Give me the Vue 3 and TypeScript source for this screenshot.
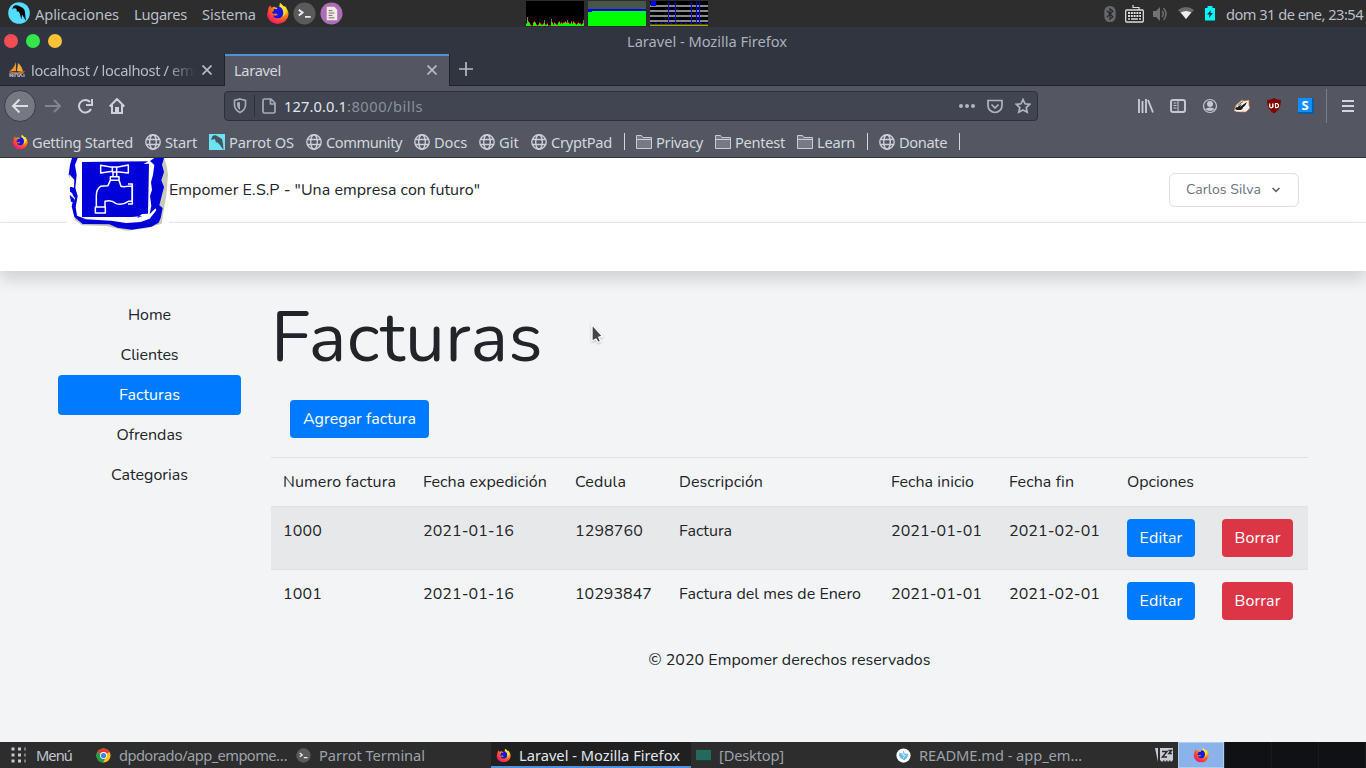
<script setup lang="ts">
import type { Directive } from 'vue'

// Spreads a label's letters so that it takes exactly the given width.
const vFit: Directive<HTMLElement, number> = {
  mounted(el, { value }) {
    const count = (el.textContent ?? '').length
    if (!count) return
    const natural = el.getBoundingClientRect().width
    el.style.letterSpacing = `${(value - natural) / count}px`
  },
}

interface Bookmark { icon: string; label?: string; width?: number }
const bookmarks: Bookmark[] = [
  { icon: 'firefox', label: 'Getting Started', width: 101 },
  { icon: 'globe', label: 'Start', width: 32 },
  { icon: 'parrot', label: 'Parrot OS', width: 65 },
  { icon: 'globe', label: 'Community', width: 76 },
  { icon: 'globe', label: 'Docs', width: 33 },
  { icon: 'globe', label: 'Git', width: 20 },
  { icon: 'globe', label: 'CryptPad', width: 61 },
  { icon: 'sep' },
  { icon: 'folder', label: 'Privacy', width: 47 },
  { icon: 'folder', label: 'Pentest', width: 50 },
  { icon: 'folder', label: 'Learn', width: 38 },
  { icon: 'sep' },
  { icon: 'globe', label: 'Donate', width: 48 },
  { icon: 'sep' },
]

const menu = [
  { label: 'Home', width: 43, active: false },
  { label: 'Clientes', width: 58, active: false },
  { label: 'Facturas', width: 61, active: true },
  { label: 'Ofrendas', width: 66, active: false },
  { label: 'Categorias', width: 77, active: false },
]

const headers = [
  { label: 'Numero factura', width: 113 },
  { label: 'Fecha expedición', width: 124 },
  { label: 'Cedula', width: 51 },
  { label: 'Descripción', width: 84 },
  { label: 'Fecha inicio', width: 83 },
  { label: 'Fecha fin', width: 65 },
  { label: 'Opciones', width: 67 },
]

const bills = [
  [['1000', 39], ['2021-01-16', 91], ['1298760', 68], ['Factura', 53], ['2021-01-01', 91], ['2021-02-01', 91]],
  [['1001', 39], ['2021-01-16', 91], ['10293847', 77], ['Factura del mes de Enero', 182], ['2021-01-01', 91], ['2021-02-01', 91]],
] as [string, number][][]

const tasks = [
  { icon: 'chrome', label: 'dpdorado/app_empome…', width: 168, active: false },
  { icon: 'terminal', label: 'Parrot Terminal', width: 106, active: false },
  { icon: 'firefox', label: 'Laravel - Mozilla Firefox', width: 161, active: true },
  { icon: 'desktop', label: '[Desktop]', width: 65, active: false },
  { icon: 'code', label: 'README.md - app_em…', width: 163, active: false },
]

const cpu = [3, 9, 5, 4, 2, 1, 1, 4, 5, 4, 2, 1, 2, 4, 3, 2, 2, 3, 6, 2, 2, 3, 1, 1, 1, 7, 4, 2, 4, 3, 2, 2, 4, 5, 3, 4, 3, 4, 4, 5, 4, 6, 4, 3, 3, 5, 3, 5, 4, 3, 2, 3, 4, 3, 3, 2, 3, 6]
</script>

<template>
  <div class="desktop">
    <svg class="defs" width="0" height="0">
      <defs>
        <radialGradient id="foxBody" cx=".75" cy=".15" r="1">
          <stop offset="0" stop-color="#fff44f" /><stop offset=".3" stop-color="#ffc21f" />
          <stop offset=".55" stop-color="#ff6b1d" /><stop offset=".8" stop-color="#ff2a4d" />
          <stop offset="1" stop-color="#e31587" />
        </radialGradient>
        <symbol id="firefox" viewBox="0 0 24 24">
          <path d="M2 10C2 7 3 5 4.500 3.500L5.500 6l3-1 5 2 1-6c2 1 3 2.500 3.500 4l2-.5C22 7 23.500 10 23.500 13a11.300 11 0 0 1-22.500 0Z" fill="url(#foxBody)" />
          <path d="M8 7l3 .5 2-2.500c3 0 5 3 5 6 0 4-3 6.500-6 6-2 0-4-1-4.500-3l3 .3 2-1.300-2-1-3 .2-1.500-2 2-.2z" fill="#1414e8" />
          <path d="M14.500 1c2 2 2.500 5 3.500 7s1 5-1 7c4-1 5-7 1.500-10.500C17 3.500 16 2 14.500 1Z" fill="#ffe226" />
        </symbol>
        <symbol id="globe" viewBox="0 0 16 16">
          <g fill="none" stroke="#cdd0d8" stroke-width="1.400"><circle cx="8" cy="8" r="7.200" /><ellipse cx="8" cy="8" rx="3.300" ry="7.200" /><path d="M1.500 5.500h13M1.500 10.500h13" /></g>
        </symbol>
        <symbol id="folder" viewBox="0 0 16 16">
          <path d="M.5 14.500v-13h5l1.500 2h8.500v11z" fill="#777a84" stroke="#c9ccd4" /><path d="M.5 5.500h15" stroke="#c9ccd4" />
        </symbol>
        <symbol id="parrot" viewBox="0 0 16 16">
          <path d="M0 0h16v16H0z" fill="#6be3f2" /><path d="M3 3c1-2 4-2 5-1l5 3 1 5 .5 6-3.500-5-3-3-1 1-1-4-4 1z" fill="#46545e" />
        </symbol>
        <symbol id="terminal" viewBox="0 0 24 24">
          <circle cx="12" cy="12" r="11.500" fill="#5a5a5a" /><path d="M6 8l4 3-4 3M12.500 15.500h6" fill="none" stroke="#eee" stroke-width="2" />
        </symbol>
        <symbol id="chrome" viewBox="0 0 16 16">
          <circle cx="8" cy="8" r="7.500" fill="#fbc116" /><path d="M8 8L1.500 4.200A7.500 7.500 0 0 1 14.500 4.300z" fill="#e33b2e" /><path d="M8 8L1.500 4.200A7.500 7.500 0 0 0 7.500 15.500L10.500 10z" fill="#229a4f" /><circle cx="8" cy="8" r="3.700" fill="#fff" /><circle cx="8" cy="8" r="2.800" fill="#3f82ed" />
        </symbol>
        <symbol id="desktop" viewBox="0 0 16 16"><path d="M0 2h16v11H0z" fill="#25695a" /><path d="M0 13h16v1H0z" fill="#174237" /></symbol>
        <symbol id="code" viewBox="0 0 16 16">
          <circle cx="8" cy="8" r="7.600" fill="#fff" /><path d="M4 5l3 1 1-3 2 3 3 0-1 4-3 3-4-2-2-3z" fill="#65b9e6" /><path d="M6 7l4 1-3 3M9 4l-1 4" fill="none" stroke="#d4effb" />
        </symbol>
      </defs>
    </svg>

    <header class="panel">
      <svg class="parrot-logo" viewBox="0 0 22 22"><circle cx="11" cy="11" r="10.800" fill="#54dbff" /><path d="M5 5c1-2 4-2.500 6-1l4 2c2 2 2 4 2.200 6.500L18 19l-4-6.500-.5 5-2-6.500-1.500-2-1 1-.5-3C7 6 5 6 4 8z" fill="#050a0d" /></svg>
      <span v-fit="84" class="m-app">Aplicaciones</span>
      <span v-fit="53" class="m-places">Lugares</span>
      <span v-fit="54" class="m-system">Sistema</span>
      <svg class="launch first"><use href="#firefox" /></svg>
      <svg class="launch"><use href="#terminal" /></svg>
      <svg class="launch last" viewBox="0 0 24 24"><circle cx="12" cy="12" r="11.500" fill="#ad6cb7" /><path d="M7 5h8l3 3v11H7z" fill="#f1edde" /><path d="M9 9h4M9 11.500h6M9 14h4M9 16.500h6" stroke="#75627a" /></svg>
      <svg class="mon first" viewBox="0 0 58 25">
        <path d="M0 0h58v25H0z" fill="#000" />
        <g v-for="(v, i) in cpu" :key="i"><rect :x="i" :y="25 - v" width="1" :height="v" :fill="v > 5 ? '#777' : '#f00'" /><rect :x="i" :y="26 - v + (v > 5 ? 2 : 0)" width="1" :height="v" fill="#0f0" /></g>
      </svg>
      <svg class="mon" viewBox="0 0 58 25"><path d="M0 0h58v25H0z" fill="#46564b" /><path d="M0 8h58v3H0z" fill="#00f" /><path d="M0 11h4v-1h54v15H0z" fill="#0f0" /></svg>
      <svg class="mon" viewBox="0 0 58 25"><path d="M0 0h58v25H0z" fill="#000" /><path d="M0 5h58M0 10h58M0 15h58M0 20h58" stroke="#888" stroke-width="2" /><path d="M18.500 1v22M25.500 1v22M41.500 1v22M46.500 1v22M49.500 1v22" stroke="#00f" /><path d="M1 0h5v5H1z" fill="#00f" /><path d="M0 22.500h58" stroke="#00f" stroke-dasharray="2 3" /><path d="M0 23h58v1H0z" fill="red" /><path d="M0 24h58v1H0z" fill="#0f0" /></svg>
      <svg class="tray bt" viewBox="0 0 12 17"><rect width="12" height="17" rx="5.500" fill="#65686c" /><path d="M2.500 5l6.500 6.500L6 14V3l3 2.500L2.500 12" fill="none" stroke="#242424" stroke-width="1.200" /></svg>
      <svg class="tray kb" viewBox="0 0 19 18"><path d="M8 0v2.500h6V5" fill="none" stroke="#ddd" stroke-width="1.200" /><rect x=".7" y="5" width="17.600" height="12" rx="1" fill="#222" stroke="#ddd" stroke-width="1.300" /><path d="M3 8h13M3 11h13" stroke="#ddd" stroke-width="2" stroke-dasharray="2 .8" /><path d="M3 14h2M6 14h7M14 14h2" stroke="#ddd" stroke-width="1.600" /></svg>
      <svg class="tray vol" viewBox="0 0 16 16"><path d="M0 5h3l4-4v14l-4-4H0z" fill="#707276" /><path d="M9 5q2.500 3 0 6M10.500 2q5 6 0 12" fill="none" stroke="#66686b" stroke-width="1.700" /></svg>
      <svg class="tray wifi" viewBox="0 0 16 13"><path d="M0 3q8-6 16 0L8 12z" fill="#686a6c" /><path d="M2.700 5.500q5.300-3 10.600 0L8 12z" fill="#eceef2" /></svg>
      <svg class="tray bat" viewBox="0 0 10 15"><path d="M0 2h2.500V0h5v2H10v12.500H0z" fill="#00f7ff" /><path d="M6 4L2 8.500h2.500L4 12l4-5H5.500z" fill="#20373b" /></svg>
      <span v-fit="137" class="clock">dom 31 de ene, 23:54</span>
    </header>

    <section class="browser">
      <div class="titlebar"><i class="dot red" /><i class="dot green" /><i class="dot yellow" /><span v-fit="160" class="wtitle">Laravel - Mozilla Firefox</span></div>
      <div class="tabs">
        <div class="tab">
          <svg class="pma" viewBox="0 0 16 16"><path d="M7 0v9H1q4-3 6-9z" fill="#ef9233" /><path d="M9 1q4 3 5 9L8 9z" fill="#f6a936" /><path d="M0 9l8 1.300L16 9l-2 3H2z" fill="#b86e2f" /><path d="M1 15v-3l2 2 1-2v3M6 15v-3h3v3M10 15l1.500-3 2 3M15 12v3" fill="none" stroke="#a7a9ca" stroke-width="1.200" /></svg>
          <span class="fade"><span v-fit="171">localhost / localhost / emp</span></span>
          <svg class="close" viewBox="0 0 10 10"><path d="M.5.500l9 9M9.500.500l-9 9" /></svg>
        </div>
        <div class="tab active"><span v-fit="47">Laravel</span><svg class="close" viewBox="0 0 10 10"><path d="M.5.500l9 9M9.500.500l-9 9" /></svg></div>
        <svg class="plus" viewBox="0 0 14 14"><path d="M7 0v14M0 7h14" stroke="#b7bac2" stroke-width="1.700" /></svg>
      </div>

      <div class="toolbar">
        <div class="back"><svg width="18" height="16" viewBox="0 0 18 16"><path d="M17 8H2M8.500 1.500L2 8l6.500 6.500" /></svg></div>
        <svg class="tool fwd" viewBox="0 0 16 16"><path d="M0 8h15M9 2l6 6-6 6" /></svg>
        <svg class="tool reload" viewBox="0 0 16 16"><path d="M13 4A6.300 6.300 0 1 0 14 11M15 1v6H9" /></svg>
        <svg class="tool home" viewBox="0 0 16 16"><path d="M.7 8.500L8 1l7.300 7.500M3 7v8h10V7M7 15v-5h2v5" /></svg>
        <div class="address">
          <svg class="shield" viewBox="0 0 14 16"><path d="M7 1l5.500 1.500v5Q12 12 7 14.500 2 12 1.500 7.500v-5z" fill="none" stroke="#a7abb5" stroke-width="1.700" /><path d="M7 4v8Q4 10 4 7V4.500z" fill="#a7abb5" /></svg>
          <i class="bar" />
          <svg class="page" viewBox="0 0 14 16"><path d="M1 2.500Q1 1 2.500 1H9l4 4v8.500Q13 15 11.500 15h-9Q1 15 1 13.500zM8.500 1v5H13" fill="none" stroke="#a7abb5" stroke-width="1.700" /></svg>
          <span v-fit="63" class="host">127.0.0.1</span><span v-fit="76" class="path">:8000/bills</span>
          <svg class="dots" viewBox="0 0 16 4"><circle cx="2" cy="2" r="2" /><circle cx="8" cy="2" r="2" /><circle cx="14" cy="2" r="2" /></svg>
          <svg class="pocket" viewBox="0 0 16 14"><path d="M1 1h14v5a7 7 0 0 1-14 0zM4.500 5L8 8.500 11.500 5" /></svg>
          <svg class="star" viewBox="0 0 16 16"><path d="M8 1.500l2 4.300 4.700.5-3.500 3.200 1 4.700L8 12l-4.200 2.200 1-4.700-3.500-3.200 4.700-.5z" /></svg>
        </div>
        <svg class="ext library" viewBox="0 0 16 16"><path d="M1 1v14M4.500 3v12M8 1v14M10 2l5 12.500" fill="none" stroke="#c5c8d0" stroke-width="1.900" /></svg>
        <svg class="ext" viewBox="0 0 16 16"><rect x="1" y="2" width="14" height="12" rx="2" fill="none" stroke="#c5c8d0" stroke-width="2" /><path d="M8 2v12M3.500 5h3M3.500 7.500h3M3.500 10h3" stroke="#c5c8d0" /></svg>
        <svg class="ext" viewBox="0 0 16 16"><circle cx="8" cy="8" r="6.500" fill="none" stroke="#c5c8d0" stroke-width="1.200" /><circle cx="8" cy="6" r="3" fill="#c5c8d0" /><path d="M3 11q5-3 10 0-5 4-10 0z" fill="#c5c8d0" /></svg>
        <svg class="ext" viewBox="0 0 16 16"><path d="M0 13l2-6 6-5 2 1 5-1v5l1 3-4 4-5 0z" fill="#f5eee7" stroke="#c46f3d" stroke-width=".7" /><path d="M1 11l4-5 4-3-3 6 4-3 3-2-2 4-4 4H3z" fill="#1c1c1d" /><path d="M3 9l5-4M9 10l5-4M2 13h5" stroke="#fff" /></svg>
        <svg class="ext" viewBox="0 0 16 16"><path d="M8 0q3 2 7 2-.2 10-7 13.500Q1.200 12 1 2q4 0 7-2z" fill="#800000" /><path d="M3.700 5.500v2.800q0 1.500 1.500 1.500T6.700 8.300V5.500M7 5.500v4M9.500 5.500h1q2 0 2 2.100t-2 2.100h-1z" fill="none" stroke="#fff" stroke-width="1.200" /></svg>
        <div class="ext sbox">S</div>
        <i class="toolsep" />
        <svg class="burger" viewBox="0 0 12 12"><path d="M0 1h12M0 6h12M0 11h12" stroke="#d3d5db" stroke-width="2" /></svg>
      </div>

      <div class="bookmarks">
        <template v-for="(b, i) in bookmarks" :key="i">
          <i v-if="b.icon === 'sep'" class="sep" />
          <div v-else class="bookmark"><svg class="bicon"><use :href="'#' + b.icon" /></svg><span v-fit="b.width!">{{ b.label }}</span></div>
        </template>
      </div>
    </section>

    <main class="site">
      <nav class="nav">
        <svg class="logo" viewBox="81 24 306 222">
          <path d="M81 24h306v222H81z" fill="#fff" />
          <path d="M98 28L91 52l9 38-4 35 8 55 0 30 22 16 72 2 62 14 60-7 45-14 7-45 7-40 5-60-4-30-8-22-22 0z" fill="#c8cabb" />
          <path d="M96 24h276l-6 20 6 22-8 25 8 20-14 55 10 8-6 30-6 14-22 12-59 9-43-6-24-10-80-1-25-21-8-32 7-28-13-26 9-10-12-31 4-30z" fill="#0001d9" />
          <path d="M113 24h230l-13 9 13 12-4 29-6 23 3 23-6 18 4 29-5 25 18-17 2 6-20 25-27 10-43 3-46-7-75-4-27-11-4-25 6-34-7-24 4-39-5-30z" fill="#fff" />
          <path d="M88 73l15 16-1 24-14-4zM88 128l17 16 0 15-15-8z" fill="#fff" />
          <path d="M90 111l12 9 1 13-13-8zM89 134l15 14 2 12-13-5z" fill="#0001d9" />
          <path d="M126 36l199-2-14 8 16-1-3 150-18 1-15 12 17-6-32 3-150 0z" fill="#0001d9" />
          <g fill="none" stroke="#fff" stroke-width="4.500" stroke-linejoin="round"><path d="M217 52l-35-6v23l35-5zM230 52l35-7v24l-35-4zM217 51h13v15h-13zM219 67v12M230 67v12M211 80h26v11h-26zM211 91l-7 16-22 2q-13 8-13 28v34h26v-17q18-6 32 6 18 8 38-6h11v-45h-11q-16 2-22 0l-6-18zM264 102h13v60h-13M166 171h30v18h-30z" /></g>
        </svg>
        <span v-fit="311" class="brand">Empomer E.S.P - "Una empresa con futuro"</span>
        <button class="user"><span v-fit="75">Carlos Silva</span><svg width="10" height="6" viewBox="0 0 10 6"><path d="M1.500 1L5 4.300 8.500 1" fill="none" stroke="#626a78" stroke-width="1.700" /></svg></button>
      </nav>
      <div class="subheader" />
      <div class="content">
        <aside class="side"><a v-for="m in menu" :key="m.label" :class="{ on: m.active }"><span v-fit="m.width">{{ m.label }}</span></a></aside>
        <section class="main">
          <h1><span v-fit="272">Facturas</span></h1>
          <button class="btn add"><span v-fit="113">Agregar factura</span></button>
          <table>
            <colgroup><col class="c1"><col class="c2"><col class="c3"><col class="c4"><col class="c5"><col class="c5"><col class="c6"><col></colgroup>
            <thead><tr><th v-for="h in headers" :key="h.label"><span v-fit="h.width">{{ h.label }}</span></th><th /></tr></thead>
            <tbody><tr v-for="row in bills" :key="row[0][0]">
              <td v-for="(cell, j) in row" :key="j"><span v-fit="cell[1]">{{ cell[0] }}</span></td>
              <td><button class="btn"><span v-fit="43">Editar</span></button></td>
              <td><button class="btn danger"><span v-fit="46">Borrar</span></button></td>
            </tr></tbody>
          </table>
          <footer><span v-fit="282">© 2020 Empomer derechos reservados</span></footer>
        </section>
      </div>
      <svg class="cursor" viewBox="0 0 16 24"><path d="M2 1.500l10.500 11.800-3.700 1 1.700 4-2.200 1.200L6 16l-4 2z" fill="#454545" stroke="#fff" stroke-width="1.300" /></svg>
    </main>

    <footer class="taskbar">
      <div class="start"><svg width="16" height="16" viewBox="0 0 16 16"><path d="M2 2h14M2 8h14M2 14h14" transform="translate(-1.500 0)" stroke="#c5cad0" stroke-width="3" stroke-dasharray="3 3.500" /></svg><span v-fit="36">Menú</span></div>
      <div v-for="t in tasks" :key="t.label" class="task" :class="{ current: t.active }"><svg class="ticon"><use :href="'#' + t.icon" /></svg><span v-fit="t.width">{{ t.label }}</span></div>
      <svg class="zz" viewBox="0 0 18 16"><path d="M0 1h3v14M5 1h13v12l-2 2-1-2-2 2-1-2-2 2-1-2-2 2-2-2z" fill="#c9ccd3" /><path d="M7 4.500h5L7.500 10H12M13.500 3.500h3L14 6.500h3" fill="none" stroke="#292a2d" stroke-width="1.500" /></svg>
      <div class="work lit"><svg class="wicon"><use href="#firefox" /></svg></div>
      <div class="work" /><div class="work" /><div class="work" />
    </footer>
  </div>
</template>

<style>
html, body { margin: 0; overflow: hidden; }
</style>
<style scoped>
* { box-sizing: border-box; }
.desktop { width: 1366px; height: 768px; display: flex; flex-direction: column; font: 14.67px/20px "Noto Sans", sans-serif; position: relative; overflow: hidden; }
.defs { position: absolute; }
svg { flex: none; display: block; }
span { white-space: nowrap; flex: none; display: inline-block; }
i, .bookmark, .task { flex: none; }
button { font: inherit; margin: 0; }

.panel { height: 27px; background: #2d2d2d; color: #b9bfc9; display: flex; align-items: center; flex: none; padding-left: 8px; }
.parrot-logo { width: 22px; height: 22px; margin-bottom: 2px; }
.m-app { margin-left: 5px; }
.m-places { margin-left: 15px; }
.m-system { margin-left: 15px; }
.launch { width: 23px; height: 23px; margin-left: 4px; margin-bottom: 1px; }
.launch.first { margin-left: 10px; }
.mon { width: 58px; height: 25px; margin-left: 4px; }
.mon.first { margin-left: 183px; }
.tray { height: 16px; }
.bt { width: 12px; margin-left: 396px; }
.kb { width: 19px; height: 18px; margin-left: 9px; }
.vol { width: 16px; margin-left: 9px; }
.wifi { width: 16px; height: 13px; margin-left: 9px; }
.bat { width: 10px; height: 15px; margin-left: 11px; }
.clock { margin-left: 11px; }

.browser { height: 131px; flex: none; background: #545762; color: #d3d7df; border-bottom: 1px solid #2d3039; }
.titlebar { height: 27px; background: #313540; display: flex; align-items: center; padding-left: 4px; color: #aab1be; }
.dot { width: 14px; height: 14px; border-radius: 50%; margin-right: 8px; }
.red { background: #f34c53; }
.green { background: #35e64b; }
.yellow { background: #fcc137; }
.wtitle { margin-left: 557px; }
.tabs { height: 32px; background: #313540; display: flex; align-items: stretch; border-bottom: 1px solid #20232b; }
.tab { width: 224px; display: flex; align-items: center; padding-left: 9px; }
.pma { width: 16px; height: 16px; margin-right: 6px; }
.fade { width: 166px; overflow: hidden; mask-image: linear-gradient(90deg, #000 82%, transparent 99%); color: #b7bcc6; }
.close { width: 10px; height: 10px; margin-left: 5px; stroke: #b8bbc3; stroke-width: 1.7; }
.tab.active { width: 226px; margin-bottom: -1px; background: #545762; border: solid #20232b; border-width: 0 1px; box-shadow: inset 0 2px #4e91dc; justify-content: space-between; padding-right: 12px; }
.plus { width: 14px; height: 14px; margin: 8px 0 0 9px; }

.toolbar { height: 40px; display: flex; align-items: center; padding-left: 4px; }
.back { width: 32px; height: 32px; border: 1px solid #393c45; border-radius: 50%; background: #777982; display: grid; place-items: center; }
.back path { fill: none; stroke: #dcdee3; stroke-width: 2; }
.tool { width: 16px; height: 16px; margin-left: 16px; fill: none; stroke: #ced1d8; stroke-width: 2; }
.fwd { margin-left: 9px; stroke: #81858f; }
.address { width: 814px; height: 30px; margin-left: 99px; background: #404551; border: 1px solid #2c303a; border-radius: 4px; display: flex; align-items: center; padding-left: 8px; }
.shield { width: 14px; height: 16px; }
.bar { width: 1px; height: 22px; background: #2c303a; margin-left: 7px; }
.page { width: 14px; height: 16px; margin-left: 7px; }
.host { color: #e2e6ed; margin-left: 8px; }
.path { color: #8b909c; }
.dots { width: 16px; height: 4px; margin-left: 536px; fill: #b1b4bc; }
.pocket, .star { width: 16px; height: 15px; margin-left: 12px; fill: none; stroke: #b1b4bc; stroke-width: 1.7; }
.star { height: 16px; }
.ext { width: 16px; height: 16px; margin-left: 16px; flex: none; }
.library { margin-left: 100px; }
.sbox { background: #118eff; color: #fff; font: bold 13px/14px "Noto Sans", sans-serif; text-align: center; border-right: 2px solid #075fac; border-bottom: 2px solid #075fac; }
.toolsep { width: 1px; height: 34px; background: #7b7e87; margin-left: 12px; }
.burger { width: 12px; height: 12px; margin-left: 15px; }
.bookmarks { height: 31px; display: flex; align-items: center; gap: 12px; padding-left: 12px; }
.bookmark { display: flex; align-items: center; gap: 4px; }
.bicon { width: 16px; height: 16px; }
.sep { width: 1px; height: 17px; background: #d4d6db; margin-right: -1px; }

.site { height: 584px; flex: none; position: relative; background: #f3f4f6; color: #212529; font: 16px/24px Nunito, Lato, sans-serif; }
.nav { height: 65px; background: #fff; border-bottom: 1px solid #e9eaec; display: flex; padding: 0 67px; }
.logo { width: 102px; height: 74px; position: relative; z-index: 3; }
.brand { margin-top: 20px; }
.user { width: 130px; height: 34px; margin: 15px 0 0 auto; border: 1px solid #dcdfe4; border-radius: 6px; background: #fff; color: #6b7280; font-size: 14px; display: flex; align-items: center; gap: 10px; padding: 0 0 0 16px; }
.subheader { height: 48px; background: #fff; box-shadow: 0 8px 16px rgba(0, 0, 0, .15); position: relative; clip-path: inset(-8px 0 -40px 0); }
.content { display: flex; padding: 24px 58px 0; }
.side { width: 183px; display: flex; flex-direction: column; flex: none; }
.side a { height: 40px; display: flex; align-items: center; justify-content: center; border-radius: 4px; }
.side a.on { background: #007bff; color: #fff; }
.main { width: 1037px; margin-left: 30px; flex: none; }
h1 { margin: 0; height: 105px; font: 400 71px/86px Nunito, Lato, sans-serif; }
.btn { height: 38px; padding: 0 13px; border: 0; border-radius: 4px; background: #007bff; color: #fff; display: flex; align-items: center; justify-content: center; }
.btn.danger { background: #dc3545; }
.add { margin-left: 19px; width: 139px; }
table { margin-top: 19px; width: 1037px; table-layout: fixed; border-collapse: separate; border-spacing: 0; }
.c1 { width: 140px; } .c2 { width: 152px; } .c3 { width: 104px; } .c4 { width: 212px; } .c5 { width: 118px; } .c6 { width: 95px; }
th, td { font-weight: 400; text-align: left; vertical-align: top; border-top: 1px solid #dee2e6; padding: 12px; white-space: nowrap; }
th { height: 49px; }
td { height: 63px; }
th span, td > span { display: block; width: max-content; }
tbody tr:nth-child(odd) td { background: #e7e8ea; }
td .btn { width: 68px; }
td .danger { width: 71px; }
.main footer { text-align: center; margin-top: 16px; }
.cursor { position: absolute; left: 590px; top: 165px; width: 16px; height: 24px; filter: drop-shadow(0 1px 1px #9999); }

.taskbar { height: 26px; background: #2d2d2d; display: flex; align-items: center; flex: none; color: #9da2aa; }
.start { width: 92px; display: flex; gap: 9px; align-items: center; padding-left: 11px; color: #c0c6d0; }
.task { width: 200px; height: 26px; display: flex; align-items: center; padding-left: 5px; gap: 8px; }
.task.current { background: #202020; box-shadow: inset 0 -2px #4e91dc; color: #e2e7ef; }
.ticon { width: 15px; height: 15px; }
.zz { width: 18px; height: 16px; margin: 0 5px 0 64px; }
.work { width: 47px; height: 26px; background: #101115; border-right: 1px solid #191a1e; flex: none; }
.work.lit { width: 46px; background: #8ab4e9; border: 1px solid #b1ccef; display: grid; place-items: center; margin-right: 1px; }
.wicon { width: 16px; height: 16px; }
</style>
